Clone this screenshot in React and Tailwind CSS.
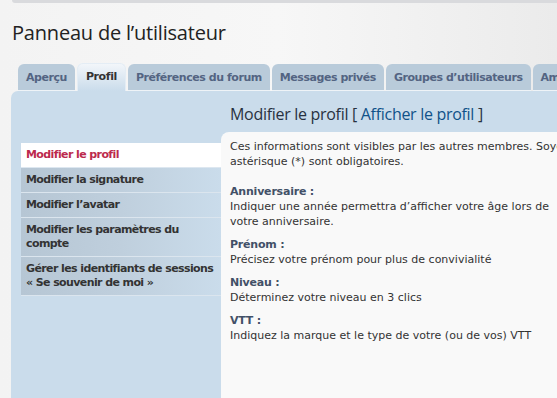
const tabs = [
  { label: "Aperçu" },
  { label: "Profil", active: true },
  { label: "Préférences du forum" },
  { label: "Messages privés" },
  { label: "Groupes d’utilisateurs" },
  { label: "Amis et ignorés" },
];

const menu = [
  { lines: ["Modifier le profil"], active: true },
  { lines: ["Modifier la signature"] },
  { lines: ["Modifier l’avatar"] },
  { lines: ["Modifier les paramètres du", "compte"] },
  { lines: ["Gérer les identifiants de sessions", "« Se souvenir de moi »"] },
];

const fields = [
  { dt: "Anniversaire :", dd: "Indiquer une année permettra d’afficher votre âge lors de votre anniversaire." },
  { dt: "Prénom :", dd: "Précisez votre prénom pour plus de convivialité" },
  { dt: "Niveau :", dd: "Déterminez votre niveau en 3 clics" },
  { dt: "VTT :", dd: "Indiquez la marque et le type de votre (ou de vos) VTT" },
];

const App = () => {
  return (
    <div className="w-[557px] h-[398px] overflow-hidden flex flex-col bg-gradient-to-r from-[#f3f3f3] via-[#f7f7f7] to-[#ebebeb] font-['DejaVu_Sans',Verdana,sans-serif]">
      <div className="h-[3px] ml-[12px] shrink-0 bg-[#d9dadd] rounded-bl-[3px]"></div>

      <h1 className="pl-[12px] pt-[18px] h-[60px] shrink-0 text-[20px] leading-[24px] text-[#222] font-['Open_Sans',sans-serif] tracking-[-0.2px]">
        Panneau de l’utilisateur
      </h1>

      {/* onglets */}
      <div className="flex items-end gap-[2px] pl-[18px] h-[28px] shrink-0 whitespace-nowrap overflow-hidden">
        {tabs.map((t) => (
          <div
            key={t.label}
            className={
              t.active
                ? "h-[28px] px-[8px] pt-[6px] rounded-t-[6px] border border-b-0 border-[#e4edf5] bg-gradient-to-b from-[#f2f6fa] to-[#cadceb] text-[#333] text-[11px] font-bold leading-[14px] tracking-[-0.4px]"
                : "h-[27px] px-[8px] pt-[7px] rounded-t-[6px] bg-[#b9cbda] border-b border-[#eef3f7] text-[#536482] text-[11px] font-bold leading-[14px] tracking-[-0.45px]"
            }
          >
            {t.label}
          </div>
        ))}
      </div>

      {/* panneau */}
      <div className="flex grow ml-[11px] bg-[#cadceb] rounded-tl-[7px]">
        <div className="w-[210px] shrink-0 pl-[10px] pt-[52px]">
          <ul className="flex flex-col">
            {menu.map((m) => (
              <li
                key={m.lines[0]}
                className={
                  m.active
                    ? "bg-white text-[#bc2a4d] px-[5px] py-[5px] text-[11px] leading-[14px] font-bold tracking-[-0.6px] whitespace-nowrap border-b border-[#dde7f0]"
                    : "bg-gradient-to-r from-[#b6c6d4] via-[#bfcfdd] to-[#cadceb] text-[#333] px-[5px] py-[5px] text-[11px] leading-[14px] font-bold tracking-[-0.6px] whitespace-nowrap border-b border-[#dbe5ee]"
                }
              >
                {m.lines.map((l) => (
                  <div key={l}>{l}</div>
                ))}
              </li>
            ))}
          </ul>
        </div>

        <div className="flex flex-col grow">
          <h2 className="h-[41px] shrink-0 pl-[9px] pt-[13px] text-[16px] leading-[20px] text-[#28313f] whitespace-nowrap font-['Open_Sans',sans-serif] tracking-[-0.3px]">
            Modifier le profil [ <span className="text-[#105289]">Afficher le profil</span> ]
          </h2>
          <div className="grow bg-[#f9f9f9] rounded-tl-[8px] pl-[9px] pt-[7px] text-[11px] leading-[15px] text-[#333] whitespace-nowrap overflow-hidden">
            <p>Ces informations sont visibles par les autres membres. Soyez prudent ; les champs marqués d’un</p>
            <p>astérisque (*) sont obligatoires.</p>
            <dl className="mt-[15px] flex flex-col gap-[8px]">
              {fields.map((f) => (
                <div key={f.dt}>
                  <dt className="font-bold text-[#425067] tracking-[-0.2px]">{f.dt}</dt>
                  <dd className="whitespace-normal w-[320px]">{f.dd}</dd>
                </div>
              ))}
            </dl>
          </div>
        </div>
      </div>
    </div>
  );
};

export default App;
